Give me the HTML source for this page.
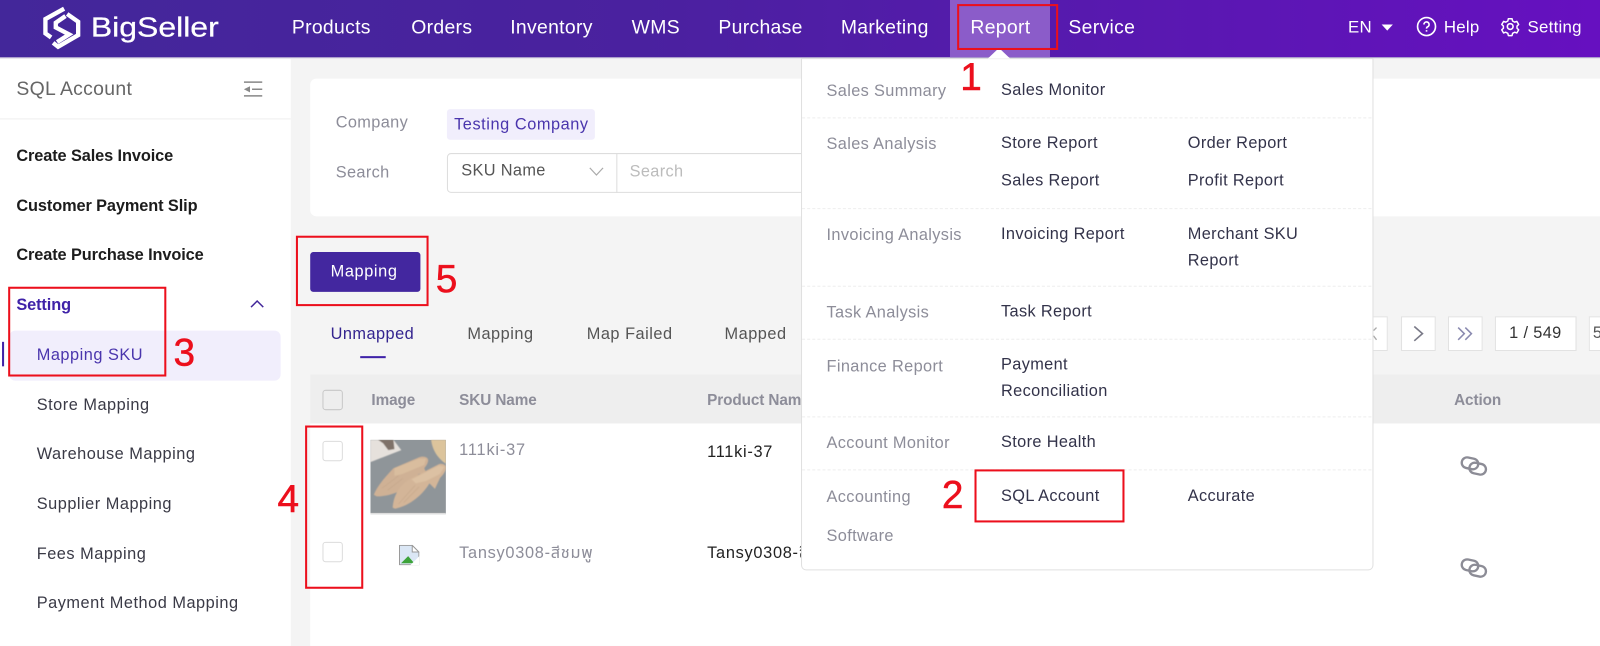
<!DOCTYPE html>
<html><head><meta charset="utf-8"><title>BigSeller SQL Account</title>
<style>
html,body{margin:0;padding:0}
body{width:1600px;height:633px;overflow:hidden;position:relative;background:#f4f4f4;font-family:"Liberation Sans","Noto Sans CJK SC",sans-serif}
#w{position:absolute;left:0;top:0;width:1568px;height:621px;transform:scale(1.02041);transform-origin:0 0}
.b{position:absolute;box-sizing:border-box}
.t{position:absolute;white-space:nowrap;line-height:24px;height:24px;font-size:16px;letter-spacing:.35px;color:#5a5a6a}
.n{font-size:19px;color:#fff;letter-spacing:.3px}
.u{font-size:16.5px;letter-spacing:.25px}
.g{color:#8d8d99}
.d{color:#33334a}
.s{color:#3a3a46;letter-spacing:.5px}
.k{color:#1c1c1c;font-weight:bold;letter-spacing:-.1px}
.l{position:absolute;left:786px;width:558px;border-top:1px dashed #eee;height:0}
.r{position:absolute;box-sizing:border-box;border:2px solid #ec0f1c}
.x{position:absolute;color:#ec0f1c;font-size:38px;line-height:40px;height:40px;-webkit-text-stroke:.5px #ec0f1c}
.c{position:absolute;box-sizing:border-box;width:20px;height:20px;border:1px solid #dcdcdc;border-radius:3px;background:#fff}
.p{position:absolute;box-sizing:border-box;background:#fff;border:1px solid #e2e2e2;top:310px;height:34px}
.h{font-weight:bold;letter-spacing:-.1px;font-size:15px}
svg{position:absolute}
</style></head><body><div id="w">

<div class="b" style="left:0;top:0;width:1568px;height:57px;background:linear-gradient(90deg,#43279a 0%,#4a219f 40%,#6610c0 100%);border-bottom:1px solid #a89bc9"></div>
<svg style="left:29.400px;top:0" width="69" height="55" viewBox="0 0 210 168" fill="none" stroke="#fff" stroke-width="13">
<path d="M103 26L47 57V100L64 112"/><path d="M107 48L78 68V82L118 103L82 126"/><path d="M112 42L145 65V105L85 140L70 128"/>
</svg>
<span class="t" style="left:89px;top:15px;font-size:27px;letter-spacing:0;color:#fff;transform:scaleX(1.16);transform-origin:0 50%;-webkit-text-stroke:.25px #fff">BigSeller</span>

<div class="b" style="left:931px;top:0;width:98px;height:56px;background:#8b5cc9"></div>
<span class="t n" style="left:286px;top:16px">Products</span>
<span class="t n" style="left:403px;top:16px">Orders</span>
<span class="t n" style="left:500px;top:16px">Inventory</span>
<span class="t n" style="left:619px;top:16px">WMS</span>
<span class="t n" style="left:704px;top:16px">Purchase</span>
<span class="t n" style="left:824px;top:16px">Marketing</span>
<span class="t n" style="left:951px;top:16px">Report</span>
<span class="t n" style="left:1047px;top:16px">Service</span>
<span class="t n u" style="left:1321px;top:15px">EN</span>
<svg style="left:1353px;top:23px" width="13" height="8"><path d="M1 1H12L6.500 7Z" fill="#fff"/></svg>
<svg style="left:1388px;top:16px" width="20" height="20" viewBox="0 0 20 20" fill="none" stroke="#fff" stroke-width="1.600"><circle cx="10" cy="10" r="8.800"/><path d="M7.500 8a2.500 2.500 0 1 1 3.500 2.300c-.8.400-1 .9-1 1.700"/><path d="M10 13.500v1.500"/></svg>
<span class="t n u" style="left:1415px;top:15px">Help</span>
<svg style="left:1470px;top:16px" width="20" height="20" viewBox="0 0 20 20" fill="none" stroke="#fff" stroke-width="1.600"><path d="M8 1.500h4l.6 2.500 2.200 1.200 2.400-.8 2 3.400-1.800 1.700v2.400l1.800 1.700-2 3.400-2.400-.8-2.200 1.200-.6 2.500H8l-.6-2.500-2.200-1.200-2.400.8-2-3.400 1.800-1.700V9.500L.8 7.800l2-3.400 2.400.8L7.400 4z" stroke-linejoin="round" transform="translate(1 1) scale(.9)"/><circle cx="10" cy="10" r="2.800"/></svg>
<span class="t n u" style="left:1497px;top:15px">Setting</span>

<div class="b" style="left:0;top:58px;width:285px;height:575px;background:#fff"></div>
<div class="b" style="left:0;top:116px;width:285px;height:1px;background:#efefef"></div>
<span class="t" style="left:16px;top:76px;font-size:19px;color:#666;letter-spacing:.3px">SQL Account</span>
<svg style="left:239px;top:79px" width="19" height="17" fill="none" stroke="#888" stroke-width="1.500"><path d="M0 1.500H18M8 8.500H18M0 15H18"/><path d="M0 8.500L6 5.500V11.500Z" fill="#888" stroke="none"/></svg>
<span class="t k" style="left:16px;top:142px">Create Sales Invoice</span>
<span class="t k" style="left:16px;top:191px">Customer Payment Slip</span>
<span class="t k" style="left:16px;top:239px">Create Purchase Invoice</span>
<span class="t" style="left:16px;top:288px;color:#3f22a8;font-weight:bold;letter-spacing:-.1px">Setting</span>
<svg style="left:245px;top:293px" width="14" height="10" fill="none" stroke="#43279a" stroke-width="1.500"><path d="M1 8L7 2L13 8"/></svg>
<div class="b" style="left:2px;top:335px;width:2px;height:24px;background:#3f22a8"></div>
<div class="b" style="left:9px;top:324px;width:266px;height:49px;background:#f1eefc;border-radius:6px"></div>
<span class="t s" style="left:36px;top:337px;color:#4a35ad">Mapping SKU</span>
<span class="t s" style="left:36px;top:386px">Store Mapping</span>
<span class="t s" style="left:36px;top:434px">Warehouse Mapping</span>
<span class="t s" style="left:36px;top:483px">Supplier Mapping</span>
<span class="t s" style="left:36px;top:532px">Fees Mapping</span>
<span class="t s" style="left:36px;top:580px">Payment Method Mapping</span>

<div class="b" style="left:304px;top:77px;width:1296px;height:135px;background:#fff;border-radius:6px"></div>
<span class="t g" style="left:329px;top:109px">Company</span>
<span class="t g" style="left:329px;top:158px">Search</span>
<div class="b" style="left:438px;top:107px;width:145px;height:30px;background:#f1eefc;border-radius:3px"></div>
<span class="t" style="left:445px;top:111px;color:#4a35ad;letter-spacing:.55px">Testing Company</span>
<div class="b" style="left:438px;top:150px;width:400px;height:39px;border:1px solid #ddd;border-radius:4px;background:#fff"></div>
<div class="b" style="left:604px;top:150px;width:1px;height:39px;background:#ddd"></div>
<span class="t" style="left:452px;top:156px;color:#555">SKU Name</span>
<svg style="left:577px;top:163px" width="15" height="10" fill="none" stroke="#aaa" stroke-width="1.200"><path d="M1 1.500L7.500 8.500L14 1.500"/></svg>
<span class="t" style="left:617px;top:157px;color:#bcbcbc">Search</span>

<div class="b" style="left:304px;top:247px;width:108px;height:39px;background:#43279f;border-radius:3px"></div>
<span class="t" style="left:324px;top:255px;color:#fff;letter-spacing:.6px">Mapping</span>

<span class="t" style="left:324px;top:316px;color:#34248f;letter-spacing:.45px">Unmapped</span>
<div class="b" style="left:353px;top:349px;width:25px;height:2px;background:#3f22a8"></div>
<span class="t s" style="left:458px;top:316px;color:#555">Mapping</span>
<span class="t s" style="left:575px;top:316px;color:#555">Map Failed</span>
<span class="t s" style="left:710px;top:316px;color:#555">Mapped</span>

<div class="b" style="left:304px;top:367px;width:1296px;height:48px;background:#eee"></div>
<div class="b" style="left:304px;top:415px;width:1296px;height:218px;background:#fff"></div>
<div class="c" style="left:316px;top:382px;background:#eee;border-color:#c8c8c8"></div>
<span class="t g h" style="left:364px;top:381px">Image</span>
<span class="t g h" style="left:450px;top:381px">SKU Name</span>
<span class="t g h" style="left:693px;top:381px">Product Name</span>
<span class="t g h" style="left:1425px;top:381px">Action</span>
<div class="c" style="left:316px;top:432px"></div>
<div class="c" style="left:316px;top:531px"></div>

<svg style="left:363px;top:431px" width="74" height="73" viewBox="48 45 220 217" preserveAspectRatio="none">
<defs><filter id="f"><feGaussianBlur stdDeviation="1.200"/></filter></defs>
<rect x="48" y="45" width="220" height="217" fill="#8f9599"/>
<g filter="url(#f)">
<path d="M48 45H115L138 75L48 110Z" fill="#e6e1dc"/>
<path d="M70 45H115L118 72L100 75L85 55Z" fill="#7f7269"/>
<path d="M225 45H268V115C245 100 228 75 225 45Z" fill="#dcc49c"/>
<path d="M58 205C70 175 95 150 115 128L190 96C206 91 218 97 216 107C214 118 207 124 205 128L210 140L188 145L175 165C150 190 110 210 66 210Z" fill="#cfb195"/>
<path d="M118 128L190 100L210 100L205 118L140 145L118 150Z" fill="#d9bd9e"/>
<path d="M113 243C115 210 130 178 165 158L248 116C262 113 271 120 268 130C263 145 256 150 251 156L236 188L220 172C200 205 165 236 120 246Z" fill="#d3b598"/>
<path d="M168 160L248 120L264 124L250 145L210 165L180 172Z" fill="#dcc1a3"/>
<path d="M82 186L130 150M98 192L142 158M130 232L178 178M145 228L190 182" stroke="#c3a588" stroke-width="1.500" fill="none"/>
</g>
<rect x="48" y="258" width="220" height="4" fill="#ddd"/>
</svg>

<svg style="left:391px;top:534px" width="20" height="20" viewBox="0 0 20 20">
<path d="M.500 .500H13L19.500 7V19.500H.500Z" fill="#dbe7f5" stroke="#9a9a9a"/>
<path d="M2 18L9 11L15 18Z" fill="#3da33a"/><path d="M13 .500V7H19.500Z" fill="#fff" stroke="#9a9a9a"/>
<path d="M11 20L20 11V20Z" fill="#fff"/>
</svg>
<span class="t g" style="left:450px;top:430px;letter-spacing:.8px">111ki-37</span>
<span class="t d" style="left:693px;top:432px;color:#222;letter-spacing:.7px">111ki-37</span>
<span class="t g" style="left:450px;top:531px;letter-spacing:.7px;font-family:'Liberation Sans','Noto Sans Thai','DejaVu Sans',sans-serif">Tansy0308-สีชมพู</span>
<span class="t d" style="left:693px;top:531px;color:#222;letter-spacing:.7px">Tansy0308-สีชมพู</span>

<div class="p" style="left:1340px;width:20px"></div>
<div class="p" style="left:1373px;width:34px"></div>
<svg style="left:1383px;top:318px" width="14" height="18" fill="none" stroke="#7a7a88" stroke-width="1.600"><path d="M3 2L11 9L3 16"/></svg>
<div class="p" style="left:1419px;width:34px"></div>
<svg style="left:1428px;top:320px" width="16" height="14" fill="none" stroke="#8a8ab0" stroke-width="1.500"><path d="M1 1L7 7L1 13M8 1L14 7L8 13"/></svg>
<div class="p" style="left:1465px;width:80px"></div>
<span class="t" style="left:1479px;top:315px;color:#333">1 / 549</span>
<div class="p" style="left:1557px;width:50px"></div>
<span class="t" style="left:1561px;top:315px;color:#555">5</span>

<svg style="left:1421px;top:441px" width="49" height="34.300" viewBox="0 0 150 105" fill="none" stroke="#8c8c96" stroke-width="7"><rect x="35" y="24" width="50" height="32" rx="16" transform="rotate(12 60 40)"/><rect x="58" y="40" width="50" height="32" rx="16" transform="rotate(12 83 56)"/></svg>
<svg style="left:1421px;top:540.600px" width="49" height="34.300" viewBox="0 0 150 105" fill="none" stroke="#8c8c96" stroke-width="7"><rect x="35" y="24" width="50" height="32" rx="16" transform="rotate(12 60 40)"/><rect x="58" y="40" width="50" height="32" rx="16" transform="rotate(12 83 56)"/></svg>

<div class="b" style="left:785px;top:57px;width:561px;height:502px;background:#fff;border:1px solid #e0e0e0;border-radius:0 0 5px 5px"></div>
<svg style="left:968px;top:47px" width="22" height="11"><path d="M0 10.500L11 0L22 10.500Z" fill="#fff"/></svg>
<svg style="left:1346px;top:320px" width="4" height="14" fill="none" stroke="#aaa" stroke-width="1.300"><path d="M3 1L0 4M0 9L3 13"/></svg>
<div class="l" style="top:115px"></div><div class="l" style="top:204px"></div><div class="l" style="top:280px"></div><div class="l" style="top:332px"></div><div class="l" style="top:408px"></div><div class="l" style="top:460px"></div>
<span class="t g" style="left:810px;top:78px">Sales Summary</span>
<span class="t d" style="left:981px;top:77px">Sales Monitor</span>
<span class="t g" style="left:810px;top:130px">Sales Analysis</span>
<span class="t d" style="left:981px;top:129px">Store Report</span>
<span class="t d" style="left:1164px;top:129px">Order Report</span>
<span class="t d" style="left:981px;top:166px">Sales Report</span>
<span class="t d" style="left:1164px;top:166px">Profit Report</span>
<span class="t g" style="left:810px;top:219px">Invoicing Analysis</span>
<span class="t d" style="left:981px;top:218px">Invoicing Report</span>
<span class="t d" style="left:1164px;top:218px">Merchant SKU</span>
<span class="t d" style="left:1164px;top:244px">Report</span>
<span class="t g" style="left:810px;top:295px">Task Analysis</span>
<span class="t d" style="left:981px;top:294px">Task Report</span>
<span class="t g" style="left:810px;top:348px">Finance Report</span>
<span class="t d" style="left:981px;top:346px">Payment</span>
<span class="t d" style="left:981px;top:372px">Reconciliation</span>
<span class="t g" style="left:810px;top:423px">Account Monitor</span>
<span class="t d" style="left:981px;top:422px">Store Health</span>
<span class="t g" style="left:810px;top:476px">Accounting</span>
<span class="t d" style="left:981px;top:475px">SQL Account</span>
<span class="t d" style="left:1164px;top:475px">Accurate</span>
<span class="t g" style="left:810px;top:514px">Software</span>

<div class="r" style="left:938px;top:4px;width:99px;height:45px"></div>
<div class="r" style="left:955px;top:460px;width:147px;height:52px"></div>
<div class="r" style="left:8px;top:281px;width:155px;height:88px"></div>
<div class="r" style="left:299px;top:417px;width:57px;height:160px"></div>
<div class="r" style="left:290px;top:231px;width:130px;height:69px"></div>
<span class="x" style="left:941px;top:56px">1</span>
<span class="x" style="left:923px;top:466px">2</span>
<span class="x" style="left:170px;top:326px">3</span>
<span class="x" style="left:272px;top:470px">4</span>
<span class="x" style="left:427px;top:254px">5</span>
</div></body></html>
